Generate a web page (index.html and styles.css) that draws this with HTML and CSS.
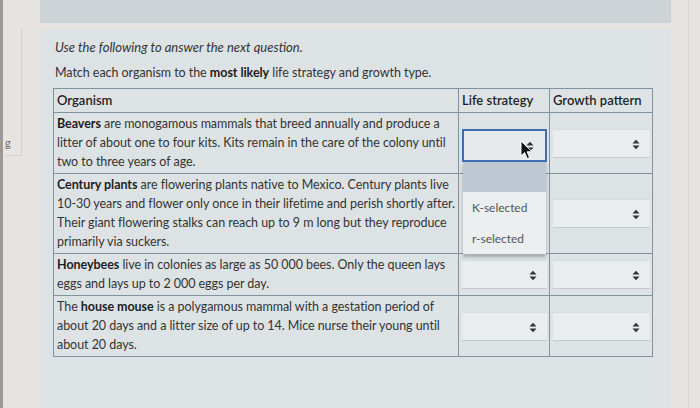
FILE: index.html
```html
<!DOCTYPE html>
<html>
<head>
<meta charset="utf-8">
<link rel="stylesheet" href="styles.css">
</head>
<body>
<div class="screen">
  <aside class="side">
    <div class="side-box"><span class="side-text">g</span></div>
  </aside>
  <div class="main">
    <div class="topband"></div>
    <section class="panel">
      <p class="intro">Use the following to answer the next question.</p>
      <p class="prompt">Match each organism to the <b>most likely</b> life strategy and growth type.</p>
      <table class="grid">
        <colgroup>
          <col class="c-org">
          <col class="c-life">
          <col class="c-growth">
        </colgroup>
        <thead>
          <tr>
            <th>Organism</th>
            <th>Life strategy</th>
            <th>Growth pattern</th>
          </tr>
        </thead>
        <tbody>
          <tr>
            <td class="org"><b>Beavers</b> are monogamous mammals that breed annually and produce a litter of about one to four kits. Kits remain in the care of the colony until two to three years of age.</td>
            <td class="sel">
              <div class="select-wrap">
                <div class="select open">
                  <svg class="arrows" width="8" height="11" viewBox="0 0 8 11"><polygon points="0.5,4.5 4,0.8 7.5,4.5"/><polygon points="0.5,6.5 4,10.2 7.5,6.5"/></svg>
                </div>
                <ul class="menu">
                  <li class="opt hl"></li>
                  <li class="opt">K-selected</li>
                  <li class="opt">r-selected</li>
                </ul>
                <svg class="cursor" width="14" height="20" viewBox="0 0 14 20"><path d="M1 1 L1 16 L4.6 12.6 L7.2 18.6 L9.6 17.6 L7.1 11.8 L12 11.8 Z" fill="#111" stroke="#fff" stroke-width="1"/></svg>
              </div>
            </td>
            <td class="sel">
              <div class="select">
                <svg class="arrows" width="8" height="11" viewBox="0 0 8 11"><polygon points="0.5,4.5 4,0.8 7.5,4.5"/><polygon points="0.5,6.5 4,10.2 7.5,6.5"/></svg>
              </div>
            </td>
          </tr>
          <tr>
            <td class="org"><b>Century plants</b> are flowering plants native to Mexico. Century plants live 10-30 years and flower only once in their lifetime and perish shortly after. Their giant flowering stalks can reach up to 9 m long but they reproduce primarily via suckers.</td>
            <td class="sel"></td>
            <td class="sel">
              <div class="select">
                <svg class="arrows" width="8" height="11" viewBox="0 0 8 11"><polygon points="0.5,4.5 4,0.8 7.5,4.5"/><polygon points="0.5,6.5 4,10.2 7.5,6.5"/></svg>
              </div>
            </td>
          </tr>
          <tr>
            <td class="org"><b>Honeybees</b> live in colonies as large as 50 000 bees. Only the queen lays eggs and lays up to 2 000 eggs per day.</td>
            <td class="sel">
              <div class="select">
                <svg class="arrows" width="8" height="11" viewBox="0 0 8 11"><polygon points="0.5,4.5 4,0.8 7.5,4.5"/><polygon points="0.5,6.5 4,10.2 7.5,6.5"/></svg>
              </div>
            </td>
            <td class="sel">
              <div class="select">
                <svg class="arrows" width="8" height="11" viewBox="0 0 8 11"><polygon points="0.5,4.5 4,0.8 7.5,4.5"/><polygon points="0.5,6.5 4,10.2 7.5,6.5"/></svg>
              </div>
            </td>
          </tr>
          <tr>
            <td class="org">The <b>house mouse</b> is a polygamous mammal with a gestation period of about 20 days and a litter size of up to 14. Mice nurse their young until about 20 days.</td>
            <td class="sel">
              <div class="select">
                <svg class="arrows" width="8" height="11" viewBox="0 0 8 11"><polygon points="0.5,4.5 4,0.8 7.5,4.5"/><polygon points="0.5,6.5 4,10.2 7.5,6.5"/></svg>
              </div>
            </td>
            <td class="sel">
              <div class="select">
                <svg class="arrows" width="8" height="11" viewBox="0 0 8 11"><polygon points="0.5,4.5 4,0.8 7.5,4.5"/><polygon points="0.5,6.5 4,10.2 7.5,6.5"/></svg>
              </div>
            </td>
          </tr>
        </tbody>
      </table>
    </section>
  </div>
  <div class="rightedge"></div>
</div>
</body>
</html>
```

FILE: styles.css
```css
* { box-sizing: border-box; }
html, body {
  margin: 0;
  padding: 0;
}
body {
  width: 700px;
  height: 408px;
  overflow: hidden;
  background: #e6e3e1;
  font-family: "Lato", "Open Sans", sans-serif;
  color: #2b2b2b;
}
.screen {
  display: flex;
  height: 408px;
  border-left: 3px solid #9f9893;
}
.side {
  width: 37px;
  flex: none;
  padding-top: 28px;
}
.side-box {
  width: 17px;
  height: 128px;
  margin-left: 2px;
  border-right: 1px solid #d2cfcc;
  border-bottom: 1px solid #d2cfcc;
}
.side-text {
  display: block;
  padding-top: 108px;
  font-size: 11px;
  color: #6b6b6b;
  line-height: 14px;
}
.main {
  width: 631px;
  flex: none;
  display: flex;
  flex-direction: column;
}
.topband {
  height: 23px;
  background: #cdd4d7;
  flex: none;
}
.panel {
  margin-top: 6px;
  flex: 1;
  background: #dde3e5;
  padding: 9px 0 0 13px;
}
.rightedge {
  flex: 1;
  border-left: 1px solid #d8d6d4;
  margin-left: 17px;
}
.intro {
  margin: 0 0 0 2px;
  font-style: italic;
  font-size: 13px;
  line-height: 18px;
  color: #333;
}
.prompt {
  margin: 8px 0 0 2px;
  font-size: 12.5px;
  letter-spacing: -0.05px;
  line-height: 18px;
  color: #333;
}
.prompt b { font-weight: 700; color: #1d1d1d; }
.grid {
  margin-top: 6px;
  border-collapse: collapse;
  width: 599px;
  table-layout: fixed;
  font-size: 12.5px;
  letter-spacing: -0.05px;
}
.c-org { width: 405px; }
.c-life { width: 91px; }
.c-growth { width: 103px; }
.grid th, .grid td {
  border: 1px solid #7f939e;
}
.grid th {
  text-align: left;
  font-weight: 600;
  font-size: 13px;
  letter-spacing: 0;
  color: #1f1f1f;
  height: 24px;
  padding: 0 3px;
  line-height: 19px;
}
.grid td.org {
  padding: 1px 3px 2px 3px;
  line-height: 19px;
  vertical-align: top;
  color: #333;
}
.org b { font-weight: 700; color: #1d1d1d; }
.grid td.sel {
  padding: 0 2px 0 3px;
  vertical-align: middle;
  position: relative;
}
.select {
  height: 29px;
  background: #e9edef;
  border-bottom: 1px solid #c3cbcf;
  border-top: 1px solid #d6dde0;
  position: relative;
}
.arrows {
  position: absolute;
  right: 10px;
  top: 9px;
  fill: #333;
}
.select-wrap {
  position: relative;
  top: 2px;
}
.select.open {
  height: 33px;
  border: 2px solid #3d6fb0;
  background: #e6eaec;
}
.select.open .arrows { top: 10px; right: 11px; }
.menu {
  position: absolute;
  top: 33px;
  left: 1px;
  right: 1px;
  margin: 0;
  padding: 0;
  list-style: none;
  background: #eceff0;
  box-shadow: 0 3px 3px rgba(0,0,0,0.25);
  z-index: 2;
  font-size: 12px;
  color: #555;
}
.opt {
  height: 31px;
  line-height: 31px;
  padding-left: 9px;
}
.opt.hl {
  height: 30px;
  background: #bec8d2;
}
.cursor {
  position: absolute;
  left: 58px;
  top: 11px;
  z-index: 3;
}
```
